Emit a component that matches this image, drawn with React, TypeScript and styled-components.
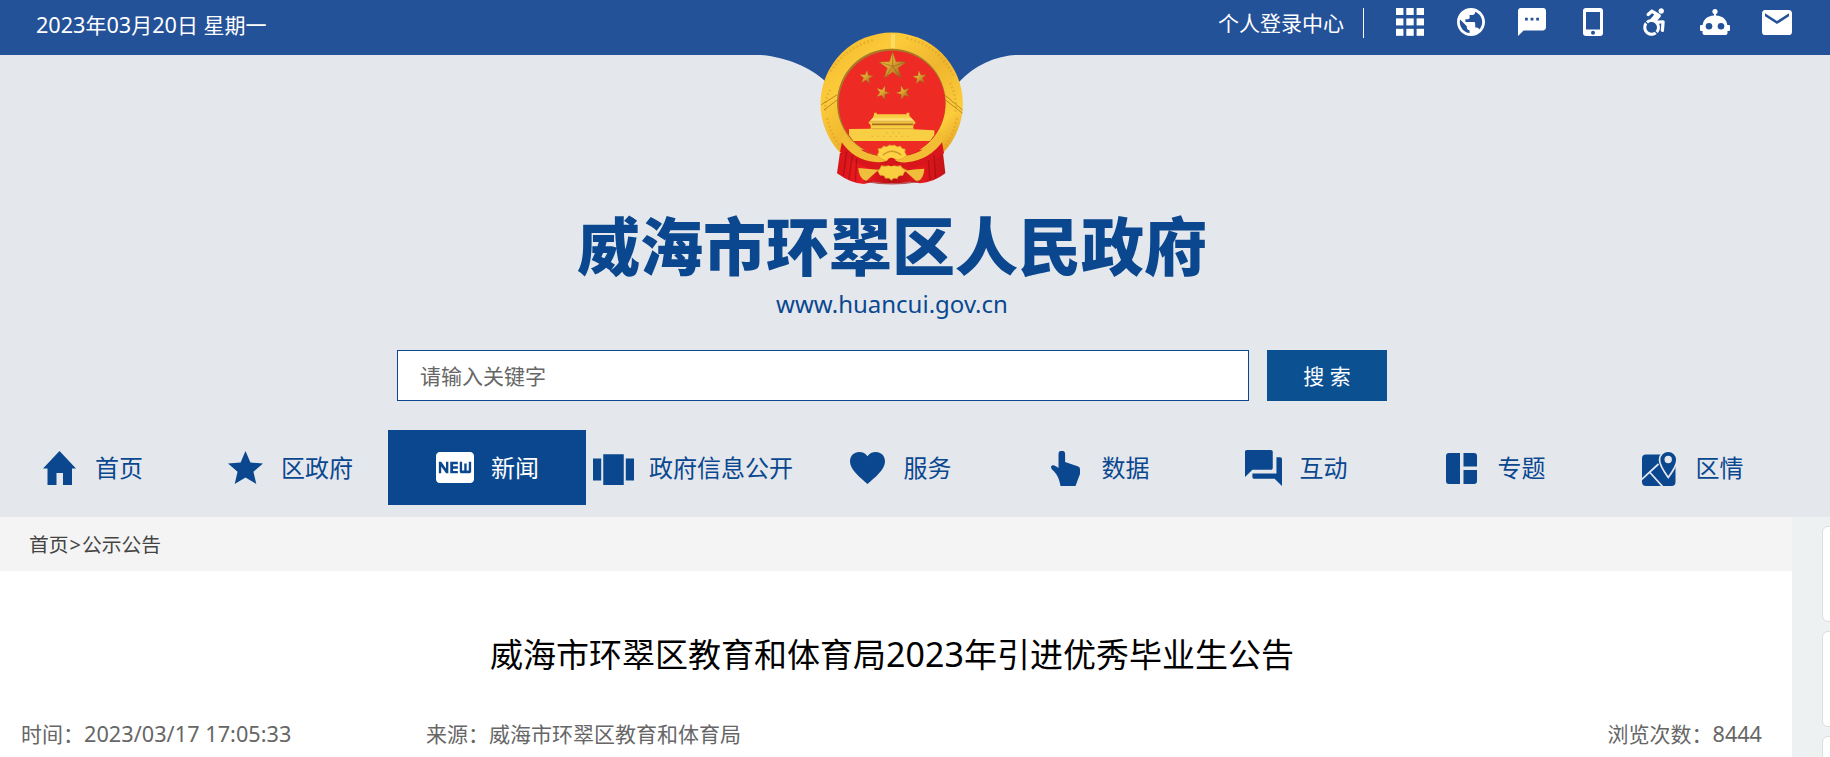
import React from "react";
import styled, { createGlobalStyle } from "styled-components";
import {
  MdPublic,
  MdSms,
  MdEmail,
  MdStar,
  MdFiberNew,
  MdViewCarousel,
  MdForum,
} from "react-icons/md";
import { FaAccessibleIcon } from "react-icons/fa";

const navy = "#0a478f";

const GlobalStyle = createGlobalStyle`
  * { box-sizing: border-box; }
  body {
    margin: 0;
    overflow: hidden;
    background: #edf1f2;
    font-family: "Noto Sans", "Noto Sans CJK SC", sans-serif;
    font-weight: 400;
  }
`;

const Page = styled.div`
  width: 1830px;
  height: 757px;
  overflow: hidden;
  display: flex;
  flex-direction: column;
`;

const Latin = styled.span<{ $gap?: number }>`
  font-size: 1.03em;
  letter-spacing: ${(p) => p.$gap ?? 0}px;
`;

const Header = styled.header`
  height: 517px;
  background: #e4e8ed;
`;

const TopBar = styled.div`
  height: 55px;
  background: #245299;
  color: #fff;
  font-size: 21px;
  line-height: 30px;
  display: flex;
  justify-content: space-between;
  padding: 8px 38px 0 36px;
`;

const DateText = styled.div`
  white-space: pre;
  padding-top: 2px;
`;

const Tools = styled.div`
  display: flex;
  height: 30px;
`;

const Login = styled.a`
  padding-right: 19px;
  border-right: 1px solid #fff;
  margin-right: 32px;
`;

const Tool = styled.span<{ $w: number; $h: number; $gap: number; $top: number }>`
  width: ${(p) => p.$w}px;
  height: ${(p) => p.$h}px;
  margin-right: ${(p) => p.$gap}px;
  margin-top: ${(p) => p.$top}px;
  svg { display: block; width: 100%; height: 100%; }
`;

const Masthead = styled.div`
  width: 1784px;
  display: flex;
  flex-direction: column;
  align-items: center;
`;

const EmblemSvg = styled.svg`
  display: block;
  width: 304px;
  height: 180px;
  margin-top: -35px;
  flex: none;
`;

const SiteName = styled.h1`
  margin: 4px 0 0;
  height: 78px;
  line-height: 78px;
  font-family: "Noto Sans CJK SC", sans-serif;
  font-weight: 900;
  font-size: 63px;
  color: ${navy};
`;

const SiteUrl = styled.div`
  height: 36px;
  margin-top: 5px;
  line-height: 34px;
  font-size: 24px;
  color: ${navy};
`;

const SearchRow = styled.form`
  display: flex;
  gap: 18px;
  margin: 27px 0 0;
`;

const SearchInput = styled.input`
  width: 852px;
  height: 51px;
  border: 1px solid ${navy};
  border-radius: 0;
  padding: 0 22px;
  background: #fff;
  outline: none;
  font: 21px "Noto Sans", "Noto Sans CJK SC", sans-serif;
  &::placeholder { color: #666; opacity: 1; }
`;

const SearchButton = styled.button`
  width: 120px;
  height: 51px;
  border: 0;
  padding: 0 0 2px;
  background: #0b5192;
  color: #fff;
  font: 21px "Noto Sans", "Noto Sans CJK SC", sans-serif;
`;

const Nav = styled.nav`
  display: flex;
  width: 1800px;
  margin: 29px 0 0 -8px;
`;

const NavItem = styled.a<{ $active?: boolean; $wide?: boolean; $shift: number }>`
  width: ${(p) => (p.$wide ? 216 : 198)}px;
  height: 75px;
  padding-right: ${(p) => p.$shift}px;
  display: flex;
  align-items: center;
  justify-content: center;
  font-size: 24px;
  line-height: 36px;
  white-space: nowrap;
  color: ${(p) => (p.$active ? "#fff" : navy)};
  background: ${(p) => (p.$active ? navy : "transparent")};
`;

const NavIcon = styled.span<{ $w: number; $h: number; $dy: number }>`
  width: 57px;
  height: 75px;
  padding-right: 15px;
  display: flex;
  align-items: center;
  justify-content: center;
  svg {
    display: block;
    flex: none;
    width: ${(p) => p.$w}px;
    height: ${(p) => p.$h}px;
    margin-top: ${(p) => p.$dy}px;
  }
`;

const Body = styled.div`
  display: flex;
  flex: 1;
  min-height: 0;
`;

const Content = styled.main`
  width: 1792px;
  background: #fff;
`;

const Crumbs = styled.div`
  display: flex;
  gap: 1px;
  height: 54px;
  line-height: 56px;
  padding-left: 29px;
  background: #f4f4f4;
  color: #444;
  font-size: 19.8px;
`;

const ArticleTitle = styled.h2`
  margin: 59px 0 0;
  width: 1784px;
  text-align: center;
  font-weight: 400;
  font-size: 33px;
  line-height: 48px;
  color: #000;
`;

const Meta = styled.div`
  display: flex;
  margin-top: 40px;
  padding: 0 30px 0 21px;
  font-size: 21px;
  line-height: 30px;
  color: #666;
  white-space: pre;
`;

const MetaTime = styled.span`
  width: 405px;
`;

const MetaViews = styled.span`
  margin-left: auto;
`;

const SideRail = styled.aside`
  width: 38px;
  padding: 9px 0 0 30px;
  overflow: hidden;
`;

const SideCard = styled.div`
  width: 96px;
  height: 96px;
  margin-bottom: 9px;
  background: #fff;
  border: 1px solid #ddd;
  border-radius: 6px;
`;

const AppsIcon = () => (
  <svg viewBox="0 0 28 28" fill="currentColor">
    {[0, 10.3, 20.6].map((y) =>
      [0, 10.3, 20.6].map((x) => <rect key={`${x}-${y}`} x={x} y={y * 1.01} width="7.4" height="7" />)
    )}
  </svg>
);

const PhoneIcon = () => (
  <svg viewBox="0 0 20 28">
    <rect width="20" height="28" rx="3" fill="currentColor" />
    <rect x="3" y="4" width="14" height="17.500" fill="#245299" />
    <circle cx="10" cy="24.800" r="2" fill="#245299" />
  </svg>
);

const RobotIcon = () => (
  <svg viewBox="0 0 30 26">
    <circle cx="15" cy="2.6" r="2.6" fill="currentColor" />
    <path
      fill="currentColor"
      d="M14 4h2v2.500c7 .3 11 4.500 11.300 9.500H29Q30 16 30 17v4Q30 22 29 22H27.500V24q0 2-2 2H4.500q-2 0-2-2v-2H1Q0 22 0 21v-4Q0 16 1 16H2.700C3 11 7 6.800 14 6.500z"
    />
    <circle cx="9" cy="17.300" r="3.300" fill="#245299" />
    <circle cx="21" cy="17.300" r="3.300" fill="#245299" />
  </svg>
);

const HomeIcon = () => (
  <svg viewBox="0 0 33 34" fill="currentColor">
    <path d="M16.500 0 33 17.500H29V34H20V22H13.500V34H4.500V17.500H0z" />
  </svg>
);

const HeartIcon = () => (
  <svg viewBox="0 0 35 32" fill="currentColor">
    <path d="M17.500 32C10 25.500 0 17.500 0 9.500 0 3.500 4.200 0 9 0c3.800 0 6.800 1.500 8.500 4.200C19.200 1.500 22.200 0 26 0c4.800 0 9 3.500 9 9.500 0 8-10 16-17.500 22.500z" />
  </svg>
);

const HandIcon = () => (
  <svg viewBox="0 0 29 35" fill="currentColor">
    <path d="M7.500 3a3.300 3.300 0 0 1 6.600 0V11l12.500 4.200Q29 16 29 18v5L24.500 35H9.500C8.500 29 6.500 23 1 18.500Q-1 15.500 1 14.500c2-.8 4.500 1 6.500 2.500z" />
  </svg>
);

const PanelsIcon = () => (
  <svg viewBox="0 0 31 31" fill="currentColor">
    <path d="M3 0H14V31H3Q0 31 0 28V3Q0 0 3 0zM17.500 0H28Q31 0 31 3V13.500H17.500zM17.500 17H31V28Q31 31 28 31H17.500z" />
  </svg>
);

const MapIcon = () => (
  <svg viewBox="0 0 35 35">
    <rect y="3.500" width="33.500" height="31.500" rx="4" fill="currentColor" />
    <path d="M-1 29 16.500 13M7.500 21 21 36" fill="none" stroke="#e4e8ed" strokeWidth="1.700" />
    <path
      d="M26.200 26.500C21.500 20 17.500 14 17.500 8.800a8.700 8.700 0 0 1 17.400 0C34.900 14 31 20 26.200 26.500z"
      fill="currentColor"
      stroke="#e4e8ed"
      strokeWidth="1.700"
    />
    <circle cx="26.200" cy="8.500" r="3.700" fill="#e4e8ed" />
  </svg>
);

const starPoints = (cx: number, cy: number, r: number, turn = 0) =>
  Array.from({ length: 10 }, (_, i) => {
    const a = -Math.PI / 2 + turn + (i * Math.PI) / 5;
    const d = i % 2 ? r * 0.39 : r;
    return `${(cx + d * Math.cos(a)).toFixed(1)},${(cy + d * Math.sin(a)).toFixed(1)}`;
  }).join(" ");

const Emblem = () => (
  <EmblemSvg viewBox="0 0 912 540">
    <defs>
      <linearGradient id="ring" x1="0" y1="0" x2="1" y2="1">
        <stop offset="0" stopColor="#f0b42c" />
        <stop offset=".3" stopColor="#fccb3a" />
        <stop offset=".55" stopColor="#efb52e" />
        <stop offset=".8" stopColor="#fccd3c" />
        <stop offset="1" stopColor="#dd9420" />
      </linearGradient>
      <linearGradient id="starGold" x1="0" y1="0" x2="1" y2="1">
        <stop offset="0" stopColor="#ffd44a" />
        <stop offset=".5" stopColor="#d99e2e" />
        <stop offset="1" stopColor="#8e5c1c" />
      </linearGradient>
      <linearGradient id="roof" x1="0" y1="0" x2="0" y2="1">
        <stop offset="0" stopColor="#f5c83c" />
        <stop offset=".6" stopColor="#ffe47c" />
        <stop offset="1" stopColor="#dba02c" />
      </linearGradient>
      <linearGradient id="drape" x1="0" y1="0" x2="1" y2="0">
        <stop offset="0" stopColor="#d81419" />
        <stop offset=".25" stopColor="#ee1c20" />
        <stop offset=".5" stopColor="#b80f14" />
        <stop offset=".75" stopColor="#e8191d" />
        <stop offset="1" stopColor="#c51318" />
      </linearGradient>
    </defs>
    <path d="M50 104C130 108 210 140 258 186H657C705 135 770 104 845 104z" fill="#245299" />
    <path d="M306 355 291 460Q335 492 372 492L400 485Q455 495 510 485L540 490Q580 488 616 460L604 355z" fill="url(#drape)" />
    <path d="M301 399A213.500 213.500 0 1 1 609 399L560 389H350z" fill="url(#ring)" />
    <path
      d="M272 154Q320 79 405 59M500 54Q600 79 640 169M262 294Q275 354 310 389M650 294Q640 349 610 384M270 209Q250 249 258 279M630 189Q655 239 645 279"
      fill="none"
      stroke="#d99a25"
      strokeWidth="7"
      strokeDasharray="5 7"
      opacity=".55"
    />
    <path d="M244 254 292 224M252 270 294 238M614 225 668 270M614 238 668 280" stroke="#a66e18" strokeWidth="3" opacity=".7" />
    <path d="M459 42V84" stroke="#ffe173" strokeWidth="12" opacity=".7" />
    <circle cx="454" cy="249" r="163" fill="#a8792a" />
    <circle cx="456" cy="252" r="160" fill="#ed2b24" />
    <path d="M306 365Q350 418 420 428H490Q560 420 606 365L612 400Q560 440 490 452L455 462 420 452Q350 440 300 395z" fill="#d9161b" />
    <path d="M312 340Q350 398 415 408Q430 420 454 420Q480 420 495 408Q565 395 600 335L611 360Q570 420 500 427Q475 430 454 415Q435 430 405 426Q340 420 302 362z" fill="#f2bd34" />
    <g fill="url(#starGold)" stroke="#a36c1c" strokeWidth="1">
      <polygon points={starPoints(458, 139, 43)} />
      <polygon points={starPoints(379, 172, 21, 0.12)} />
      <polygon points={starPoints(539, 173, 21, -0.12)} />
      <polygon points={starPoints(428, 218, 21, 0.35)} />
      <polygon points={starPoints(490, 218, 21, -0.35)} />
    </g>
    <g stroke="#765018" strokeWidth="2" opacity=".65">
      <path d="M458 139 482 174M458 139 498 126M458 139 434 174M458 139V98M458 139 418 126" />
    </g>
    <path d="M403 278H410V283H500V278H508V294L518 297 527 308 520 316V328L583 331V345L570 363H340L327 345V327L392 326V315L385 308 400 292z" fill="#f8ce43" />
    <path d="M402 289H510L524 307H388z" fill="url(#roof)" />
    <path d="M396 313H520" stroke="#a66d20" strokeWidth="5" />
    <path d="M394 326H522" stroke="#dca536" strokeWidth="3" />
    <path d="M395 349H520M440 338H485" stroke="#d89f30" strokeWidth="3" strokeDasharray="3 15" />
    <path
      d="M412 405Q420 396 414 386Q427 388 430 378Q442 383 448 375Q457 378 463 375Q471 384 481 378Q485 388 496 388Q491 397 500 406Q490 418 472 420Q455 410 440 422Q420 418 412 405z"
      fill="#ffd343"
      stroke="#dda02a"
      strokeWidth="2"
    />
    <path d="M428 406Q455 382 484 405" fill="none" stroke="#d49a2c" strokeWidth="4" />
    <path d="M355 444Q390 448 416 449L378 484Q355 472 355 444zM553 446Q520 448 494 452L532 486Q552 474 553 446z" fill="#efbe3d" />
    <path d="M413 452Q422 446 424 437Q441 443 454 432Q467 443 482 437Q486 447 500 450Q490 456 488 467Q473 465 472 476Q461 471 454 481Q448 471 436 475Q434 464 420 466z" fill="#f9cf3f" stroke="#d99b2a" strokeWidth="2" />
    <circle cx="454" cy="426" r="13" fill="#d9161b" />
    <path d="M320 395 310 468M337 405 327 478M350 415 346 485M582 405 587 475M565 420 570 480" stroke="#9b0d13" strokeWidth="4" opacity=".6" />
    <path d="M372 483Q455 500 540 483" fill="none" stroke="#a51d18" strokeWidth="4" opacity=".7" />
  </EmblemSvg>
);

const fit = { preserveAspectRatio: "none" };

const tools = [
  { icon: <AppsIcon />, w: 28, h: 28, gap: 33, top: 0 },
  { icon: <MdPublic viewBox="2 2 20 20" {...fit} />, w: 28, h: 28, gap: 33, top: 0 },
  { icon: <MdSms viewBox="2 2 20 20" {...fit} />, w: 28, h: 28, gap: 37, top: 0 },
  { icon: <PhoneIcon />, w: 20, h: 28, gap: 39, top: 0 },
  { icon: <FaAccessibleIcon />, w: 24, h: 28, gap: 34, top: 0 },
  { icon: <RobotIcon />, w: 30, h: 26, gap: 32, top: 1 },
  { icon: <MdEmail viewBox="2 4 20 16" {...fit} />, w: 30, h: 25, gap: 0, top: 2 },
];

const navItems = [
  { label: "首页", icon: <HomeIcon />, w: 33, h: 34, dy: 0, shift: 1 },
  { label: "区政府", icon: <MdStar viewBox="2 2 20 19" {...fit} />, w: 35, h: 33, dy: 0, shift: 1 },
  { label: "新闻", icon: <MdFiberNew viewBox="2 4 20 16" {...fit} />, w: 38, h: 31, dy: 0, shift: 1, active: true },
  { label: "政府信息公开", icon: <MdViewCarousel viewBox="2 4 20 15" {...fit} />, w: 41, h: 33, dy: 1, shift: 3, wide: true },
  { label: "服务", icon: <HeartIcon />, w: 35, h: 32, dy: 1, shift: 4 },
  { label: "数据", icon: <HandIcon />, w: 29, h: 35, dy: 2, shift: 4 },
  { label: "互动", icon: <MdForum viewBox="2 2 20 20" {...fit} />, w: 37, h: 36, dy: 0, shift: 4 },
  { label: "专题", icon: <PanelsIcon />, w: 31, h: 31, dy: 2, shift: 4 },
  { label: "区情", icon: <MapIcon />, w: 35, h: 35, dy: 2, shift: 4 },
];

export default function App() {
  return (
    <Page>
      <GlobalStyle />
      <Header>
        <TopBar>
          <DateText>
            <Latin>2023</Latin>年<Latin>03</Latin>月<Latin>20</Latin>日 星期一
          </DateText>
          <Tools>
            <Login>个人登录中心</Login>
            {tools.map((t, i) => (
              <Tool key={i} $w={t.w} $h={t.h} $gap={t.gap} $top={t.top}>
                {t.icon}
              </Tool>
            ))}
          </Tools>
        </TopBar>
        <Masthead>
          <Emblem />
          <SiteName>威海市环翠区人民政府</SiteName>
          <SiteUrl>www.huancui.gov.cn</SiteUrl>
          <SearchRow>
            <SearchInput placeholder="请输入关键字" />
            <SearchButton type="button">搜 索</SearchButton>
          </SearchRow>
        </Masthead>
        <Nav>
          {navItems.map((n) => (
            <NavItem key={n.label} $active={n.active} $wide={n.wide} $shift={n.shift}>
              <NavIcon $w={n.w} $h={n.h} $dy={n.dy}>
                {n.icon}
              </NavIcon>
              {n.label}
            </NavItem>
          ))}
        </Nav>
      </Header>
      <Body>
        <Content>
          <Crumbs>
            <span>首页</span>
            <span>&gt;</span>
            <span>公示公告</span>
          </Crumbs>
          <ArticleTitle>
            威海市环翠区教育和体育局<Latin>2023</Latin>年引进优秀毕业生公告
          </ArticleTitle>
          <Meta>
            <MetaTime>
              时间：<Latin $gap={0.05}>2023/03/17 17:05:33</Latin>
            </MetaTime>
            <span>来源：威海市环翠区教育和体育局</span>
            <MetaViews>
              浏览次数：<Latin>8444</Latin>
            </MetaViews>
          </Meta>
        </Content>
        <SideRail>
          <SideCard />
          <SideCard />
          <SideCard />
        </SideRail>
      </Body>
    </Page>
  );
}
